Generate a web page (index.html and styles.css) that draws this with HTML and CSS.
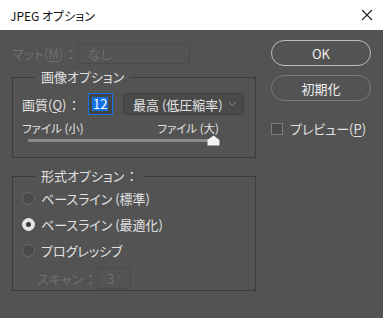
FILE: index.html
```html
<!DOCTYPE html>
<html lang="ja">
<head>
    <meta charset="UTF-8">
    <title>JPEG オプション</title>
    <link rel="stylesheet" href="styles.css">
</head>
<body>
    <div class="titlebar">
        <span class="title">JPEG オプション</span>
        <svg class="close" width="12" height="12" viewBox="0 0 12 12">
            <path d="M1 1 L11 11 M11 1 L1 11" stroke="#222" stroke-width="1.1" fill="none"/>
        </svg>
    </div>

    <div class="dialog">
        <div class="left">
            <div class="matte-row disabled">
                <span class="label">マット(<u>M</u>)<span class="colon">：</span></span>
                <div class="select select-matte">
                    <span>なし</span>
                    <svg class="chev" width="9" height="6" viewBox="0 0 9 6"><path d="M1 1 L4.5 4.5 L8 1" stroke="#5e5e5e" fill="none"/></svg>
                </div>
            </div>

            <fieldset class="group group-image">
                <legend>画像オプション</legend>
                <div class="quality-row">
                    <span class="label">画質(<u>Q</u>)<span class="colon">：</span></span>
                    <div class="num-input"><span class="sel">12</span></div>
                    <div class="select select-quality">
                        <span>最高 (低圧縮率)</span>
                        <svg class="chev" width="9" height="6" viewBox="0 0 9 6"><path d="M1 1 L4.5 4.5 L8 1" stroke="#8a8a8a" fill="none"/></svg>
                    </div>
                </div>
                <div class="size-labels">
                    <span>ファイル (小)</span>
                    <span>ファイル (大)</span>
                </div>
                <div class="slider">
                    <div class="track"></div>
                    <svg class="thumb" width="13" height="11" viewBox="0 0 13 11">
                        <path d="M6.5 0.5 L12.5 5 L12.5 10.5 L0.5 10.5 L0.5 5 Z" fill="#f2f2f2"/>
                    </svg>
                </div>
            </fieldset>

            <fieldset class="group group-format">
                <legend>形式オプション<span class="colon">：</span></legend>
                <label class="radio-row"><span class="radio"></span>ベースライン (標準)</label>
                <label class="radio-row"><span class="radio checked"></span>ベースライン (最適化)</label>
                <label class="radio-row"><span class="radio"></span>プログレッシブ</label>
                <div class="scan-row disabled">
                    <span class="label">スキャン<span class="colon">：</span></span>
                    <div class="select select-scan">
                        <span>3</span>
                        <svg class="chev" width="9" height="6" viewBox="0 0 9 6"><path d="M1 1 L4.5 4.5 L8 1" stroke="#5e5e5e" fill="none"/></svg>
                    </div>
                </div>
            </fieldset>
        </div>

        <div class="right">
            <button class="btn btn-ok">OK</button>
            <button class="btn btn-reset">初期化</button>
            <label class="check-row"><span class="checkbox"></span>プレビュー(<u>P</u>)</label>
        </div>
    </div>
</body>
</html>
```

FILE: styles.css
```css
* {
    margin: 0;
    padding: 0;
    box-sizing: border-box;
}

body {
    width: 383px;
    height: 318px;
    background: #535353;
    font-family: "Noto Sans CJK JP", "Noto Sans", sans-serif;
    font-size: 13px;
    font-feature-settings: "palt";
    color: #e2e2e2;
    overflow: hidden;
    white-space: nowrap;
}

u {
    text-decoration-thickness: 1px;
    text-underline-offset: 2px;
}

.colon {
    font-feature-settings: normal;
    margin-left: 1px;
}

/* Barre de titre */
.titlebar {
    height: 30px;
    background: #ffffff;
    display: flex;
    align-items: center;
    justify-content: space-between;
    padding: 0 10px 0 10px;
}

.title {
    font-size: 12px;
    color: #111;
}

/* Corps */
.dialog {
    display: flex;
    padding-left: 12px;
}

.left {
    width: 244px;
    flex-shrink: 0;
}

.right {
    margin-left: 15px;
    padding-top: 10px;
    display: flex;
    flex-direction: column;
    width: 100px;
    flex-shrink: 0;
}

.disabled {
    color: #6f6f6f;
}

.label {
    flex-shrink: 0;
}

.matte-row {
    display: flex;
    align-items: center;
    height: 20px;
    margin-top: 13px;
}

.matte-row .label {
    width: 66px;
}

.select {
    display: flex;
    align-items: center;
    justify-content: space-between;
    border: 1px solid #474747;
    border-radius: 3px;
    background: #4d4d4d;
    padding: 0 6px 0 9px;
    flex-shrink: 0;
}

.select-matte {
    width: 112px;
    height: 21px;
    background: #535353;
    border-color: #4a4a4a;
}

/* Groupes */
.group {
    border: 1px solid #3c3c3c;
    margin-top: 6px;
    padding: 0 0 0 9px;
}

.group legend {
    margin-left: 13px;
    padding: 0 6px;
    line-height: 16px;
    font-size: 13px;
}

.group-image {
    height: 89px;
}

.quality-row {
    display: flex;
    align-items: center;
    margin-top: 8px;
}

.quality-row .label {
    width: 66px;
}

.num-input {
    width: 25px;
    height: 22px;
    border: 1px solid #1473e6;
    background: #454545;
    display: flex;
    align-items: center;
    padding-left: 3px;
    flex-shrink: 0;
}

.num-input .sel {
    background: #1473e6;
    color: #ffffff;
    line-height: 14px;
    padding: 0 1px;
}

.select-quality {
    margin-left: 10px;
    width: 121px;
    height: 22px;
    background: #4a4a4a;
    border-color: #3d3d3d;
}

.size-labels {
    display: flex;
    width: 197px;
    justify-content: space-between;
    font-size: 11.5px;
    margin-top: 6px;
    line-height: 14px;
}

.slider {
    position: relative;
    height: 12px;
    margin-left: 6px;
    width: 186px;
}

.track {
    position: absolute;
    left: 0;
    right: 0;
    top: 4px;
    height: 3px;
    background: #8a8a8a;
}

.thumb {
    position: absolute;
    right: -6px;
    top: 0;
}

.group-format {
    margin-top: 10px;
    height: 123px;
    padding-top: 1px;
}

.radio-row {
    display: flex;
    align-items: center;
    height: 26px;
}

.radio {
    width: 13px;
    height: 13px;
    border-radius: 50%;
    border: 1px solid #6c6c6c;
    background: #4a4a4a;
    margin-right: 6px;
    flex-shrink: 0;
}

.radio.checked {
    background: #e4e4e4;
    border-color: #e4e4e4;
    position: relative;
}

.radio.checked::after {
    content: "";
    position: absolute;
    left: 3px;
    top: 3px;
    width: 5px;
    height: 5px;
    border-radius: 50%;
    background: #3a3a3a;
}

.scan-row {
    display: flex;
    align-items: center;
    margin-top: 4px;
    padding-left: 15px;
}

.scan-row .label {
    width: 60px;
}

.select-scan {
    width: 34px;
    height: 22px;
    background: #535353;
    border-color: #4a4a4a;
    padding: 0 4px 0 9px;
}

/* Boutons */
.btn {
    height: 26px;
    border-radius: 13px;
    background: #535353;
    color: #f0f0f0;
    font-family: inherit;
    font-size: 13px;
    font-feature-settings: "palt";
}

.btn-ok {
    border: 1px solid #bdbdbd;
}

.btn-reset {
    border: 1px solid #7a7a7a;
    margin-top: 9px;
}

.check-row {
    display: flex;
    align-items: center;
    margin-top: 18px;
}

.checkbox {
    width: 12px;
    height: 12px;
    border: 1px solid #7c7c7c;
    background: #4a4a4a;
    margin-right: 7px;
    flex-shrink: 0;
}
```
